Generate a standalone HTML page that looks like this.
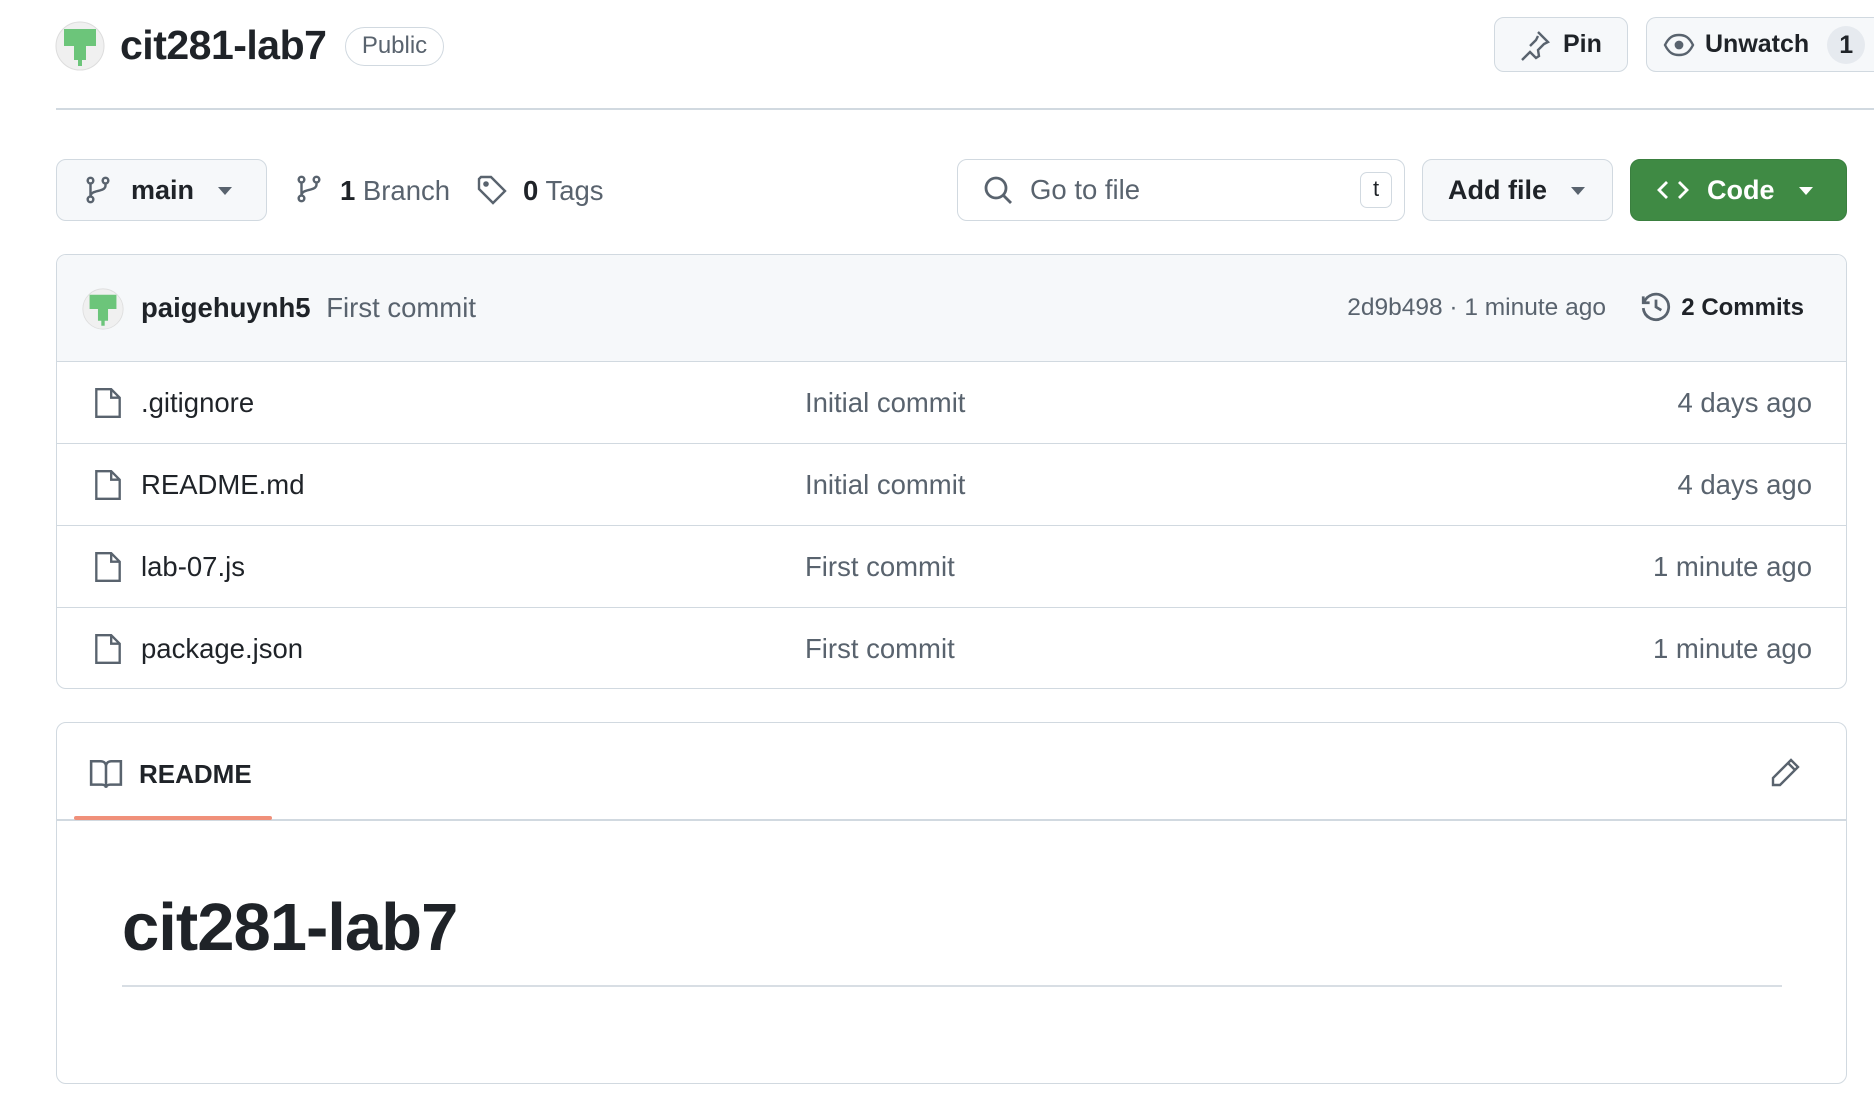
<!DOCTYPE html>
<html><head><style>
*{box-sizing:border-box;margin:0;padding:0}
body{width:1874px;height:1094px;overflow:hidden;background:#fff;font-family:"Liberation Sans",sans-serif;color:#1f2328;position:relative}
.a{position:absolute}
.btn{position:absolute;border:1.5px solid #d1d9e0;border-radius:10px;background:#f6f8fa;display:flex;align-items:center}
.muted{color:#59636e}
svg{display:block}
.row{position:absolute;left:0;right:0;height:82px;border-top:1.5px solid #d1d9e0;font-size:27.5px}
.row .ic{position:absolute;left:36px;top:24px}
.row .n{position:absolute;left:84px;top:25px}
.row .m{position:absolute;left:748px;top:25px;color:#59636e}
.row .d{position:absolute;right:34px;top:25px;color:#59636e}
</style></head><body>

<svg class="a" style="left:55px;top:21px" width="50" height="50" viewBox="0 0 50 50">
<circle cx="25" cy="25" r="24" fill="#f0f0f0" stroke="#ddd"/>
<path d="M9 8h32v17h-10v14h-4v6h-4v-6h-4V25H9z" fill="#6cc57a"/>
</svg>
<div class="a" style="left:120px;top:22px;font-size:41px;font-weight:bold;letter-spacing:-0.5px">cit281-lab7</div>
<div class="a" style="left:345px;top:27px;width:99px;height:39px;border:1.5px solid #d1d9e0;border-radius:20px;font-size:24px;color:#59636e;text-align:center;line-height:36px">Public</div>

<div class="btn" style="left:1494px;top:17px;width:134px;height:55px;padding-left:24px;font-size:25px;font-weight:bold">
<svg width="32" height="32" viewBox="0 0 16 16" fill="none" stroke="#59636e" stroke-width="1.2"><path d="M9.5 1.5l5 5-2 1-3 3 .5 3-1.5 1-3-3-4 4M5.5 8.5l3-3 1-2"/></svg>
<span style="margin-left:12px">Pin</span></div>
<div class="btn" style="left:1646px;top:17px;width:240px;height:55px;padding-left:16px;font-size:25px;font-weight:bold">
<svg width="32" height="32" viewBox="0 0 16 16" fill="none" stroke="#59636e" stroke-width="1.2"><path d="M1 8c2-4 4-5 7-5s5 1 7 5c-2 4-4 5-7 5S3 12 1 8z"/><circle cx="8" cy="8" r="1.6" fill="#59636e"/></svg>
<span style="margin-left:10px">Unwatch</span>
<span style="margin-left:18px;width:38px;height:38px;border-radius:19px;background:#e6eaef;text-align:center;line-height:38px">1</span></div>

<div class="a" style="left:56px;top:108px;right:0;height:2px;background:#d1d9e0"></div>

<div class="btn" style="left:56px;top:159px;width:211px;height:62px;padding-left:26px;font-size:27px;font-weight:bold">
<svg width="30" height="30" viewBox="0 0 16 16" fill="none" stroke="#59636e" stroke-width="1.3"><circle cx="4" cy="3" r="1.5"/><circle cx="12" cy="3" r="1.5"/><circle cx="4" cy="13" r="1.5"/><path d="M4 4.5v7M12 4.5v1c0 2-2 2.5-4 3s-4 1-4 3"/></svg>
<span style="margin-left:18px">main</span>
<span style="margin-left:24px;border:7px solid transparent;border-top:8px solid #59636e;margin-top:8px"></span></div>
<svg class="a" style="left:294px;top:174px" width="30" height="30" viewBox="0 0 16 16" fill="none" stroke="#59636e" stroke-width="1.3"><circle cx="4" cy="3" r="1.5"/><circle cx="12" cy="3" r="1.5"/><circle cx="4" cy="13" r="1.5"/><path d="M4 4.5v7M12 4.5v1c0 2-2 2.5-4 3s-4 1-4 3"/></svg>
<div class="a muted" style="left:340px;top:175px;font-size:27.5px"><b style="color:#1f2328">1</b> Branch</div>
<svg class="a" style="left:476px;top:174px" width="32" height="32" viewBox="0 0 16 16" fill="none" stroke="#59636e" stroke-width="1.2"><path d="M1.5 2.5v5l7 7 6-6-7-7h-5z"/><circle cx="5" cy="5" r=".8" fill="#59636e"/></svg>
<div class="a muted" style="left:523px;top:175px;font-size:27.5px"><b style="color:#1f2328">0</b> Tags</div>

<div class="btn" style="left:957px;top:159px;width:448px;height:62px;background:#fff;padding-left:24px;font-size:27.5px;color:#59636e">
<svg width="32" height="32" viewBox="0 0 16 16" fill="none" stroke="#59636e" stroke-width="1.4"><circle cx="7" cy="7" r="5"/><path d="M10.5 10.5l4 4"/></svg>
<span style="margin-left:16px">Go to file</span>
<span style="position:absolute;right:12px;top:12px;width:32px;height:36px;border:1.5px solid #d1d9e0;border-radius:7px;font-size:22px;text-align:center;line-height:32px;color:#1f2328">t</span></div>
<div class="btn" style="left:1422px;top:159px;width:191px;height:62px;padding-left:25px;font-size:27px;font-weight:bold">Add file
<span style="margin-left:24px;border:7px solid transparent;border-top:8px solid #59636e;margin-top:8px"></span></div>
<div class="btn" style="left:1630px;top:159px;width:217px;height:62px;background:#3f8a44;border-color:#3a7f3f;padding-left:26px;font-size:27px;font-weight:bold;color:#fff">
<svg width="32" height="32" viewBox="0 0 16 16" fill="none" stroke="#fff" stroke-width="1.4"><path d="M5 4L1 8l4 4M11 4l4 4-4 4"/></svg>
<span style="margin-left:18px">Code</span>
<span style="margin-left:24px;border:7px solid transparent;border-top:8px solid #fff;margin-top:8px"></span></div>

<div class="a" style="left:56px;top:254px;width:1791px;height:435px;border:1.5px solid #d1d9e0;border-radius:10px;overflow:hidden">
<div class="a" style="left:0;top:0;right:0;height:106px;background:#f6f8fa">
<svg class="a" style="left:25px;top:33px" width="42" height="42" viewBox="0 0 50 50"><circle cx="25" cy="25" r="24" fill="#f0f0f0" stroke="#ddd"/><path d="M9 8h32v17h-10v14h-4v6h-4v-6h-4V25H9z" fill="#6cc57a"/></svg>
<div class="a" style="left:84px;top:37px;font-size:27.5px;font-weight:bold">paigehuynh5 <span class="muted" style="font-weight:normal;margin-left:8px">First commit</span></div>
<div class="a muted" style="right:240px;top:39px;font-size:24.5px">2d9b498 · 1 minute ago</div>
<svg class="a" style="left:1582px;top:35px" width="34" height="34" viewBox="0 0 16 16" fill="none" stroke="#59636e" stroke-width="1.3"><path d="M2 3v3h3"/><path d="M2.3 6A6 6 0 1 1 2 8.5"/><path d="M8 4.5V8l2.5 1.5"/></svg>
<div class="a" style="right:42px;top:39px;font-size:24px;font-weight:bold">2 Commits</div>
</div>
<div class="row" style="top:106px"><svg class="ic" width="30" height="34" viewBox="0 0 14 16" fill="none" stroke="#59636e" stroke-width="1.1"><path d="M1.5 1.5h7l4 4v9h-11z M8.5 1.5v4h4"/></svg><span class="n">.gitignore</span><span class="m">Initial commit</span><span class="d">4 days ago</span></div>
<div class="row" style="top:188px"><svg class="ic" width="30" height="34" viewBox="0 0 14 16" fill="none" stroke="#59636e" stroke-width="1.1"><path d="M1.5 1.5h7l4 4v9h-11z M8.5 1.5v4h4"/></svg><span class="n">README.md</span><span class="m">Initial commit</span><span class="d">4 days ago</span></div>
<div class="row" style="top:270px"><svg class="ic" width="30" height="34" viewBox="0 0 14 16" fill="none" stroke="#59636e" stroke-width="1.1"><path d="M1.5 1.5h7l4 4v9h-11z M8.5 1.5v4h4"/></svg><span class="n">lab-07.js</span><span class="m">First commit</span><span class="d">1 minute ago</span></div>
<div class="row" style="top:352px"><svg class="ic" width="30" height="34" viewBox="0 0 14 16" fill="none" stroke="#59636e" stroke-width="1.1"><path d="M1.5 1.5h7l4 4v9h-11z M8.5 1.5v4h4"/></svg><span class="n">package.json</span><span class="m">First commit</span><span class="d">1 minute ago</span></div>
</div>

<div class="a" style="left:56px;top:722px;width:1791px;height:362px;border:1.5px solid #d1d9e0;border-radius:10px">
<div class="a" style="left:0;right:0;top:96px;height:2px;background:#d1d9e0"></div>
<div class="a" style="left:17px;top:93px;width:198px;height:4px;background:#f0907a;border-radius:2px"></div>
<svg class="a" style="left:32px;top:35px" width="34" height="32" viewBox="0 0 16 15" fill="none" stroke="#59636e" stroke-width="1.2"><path d="M1 1.5h4.5c1.5 0 2.5 1 2.5 2.5v10c0-1-1-1.5-2-1.5H1z M15 1.5h-4.5C9 1.5 8 2.5 8 4v10c0-1 1-1.5 2-1.5h5z"/></svg>
<div class="a" style="left:82px;top:36px;font-size:26px;font-weight:bold">README</div>
<svg class="a" style="left:1712px;top:34px" width="32" height="32" viewBox="0 0 16 16" fill="none" stroke="#59636e" stroke-width="1.2"><path d="M11 1.5l3.5 3.5-9 9H2v-3.5z M9.5 3l3.5 3.5"/></svg>
<div class="a" style="left:65px;top:166px;font-size:67px;font-weight:bold;letter-spacing:-1px">cit281-lab7</div>
<div class="a" style="left:65px;top:262px;width:1660px;height:2px;background:#d8dee4"></div>
</div>
</body></html>
